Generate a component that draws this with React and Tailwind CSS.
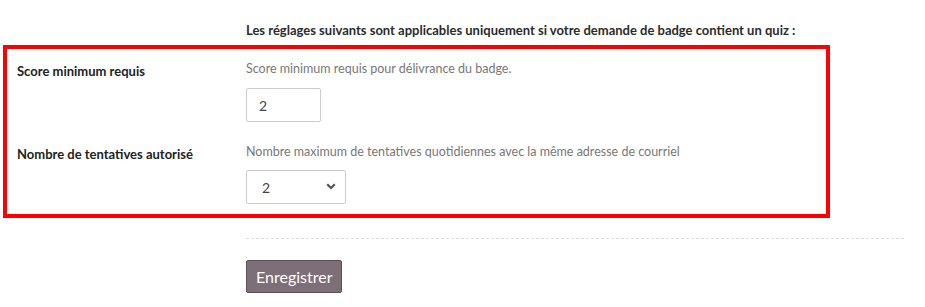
import React from 'react';

export default function App() {
    return (
        <div className="w-[925px] h-[307px] bg-white text-[#333] font-['Lato','Liberation_Sans',sans-serif] pt-[21px]">
            {/* Heading */}
            <p className="ml-[246px] text-[13px] leading-[18px] font-bold text-[#2b2b2b] mb-[6px]">
                Les réglages suivants sont applicables uniquement si votre demande de badge contient un quiz :
            </p>

            {/* Quiz settings */}
            <div className="ml-[3px] w-[827px] h-[173px] border-4 border-[#ff0000] pt-[10px] pl-[10px]">
                <div className="flex">
                    <label className="w-[229px] pt-[3px] text-[13px] leading-[18px] font-bold text-[#222]">
                        Score minimum requis
                    </label>
                    <div>
                        <p className="text-[12.5px] leading-[20px] text-[#777]">
                            Score minimum requis pour délivrance du badge.
                        </p>
                        <input
                            type="text"
                            defaultValue="2"
                            className="mt-[9px] w-[75px] h-[34px] border border-[#cccccc] rounded-[2px] pl-[12px] text-[14px] text-[#444] outline-none"
                        />
                    </div>
                </div>

                <div className="flex mt-[20px]">
                    <label className="w-[229px] pt-[3px] text-[13px] leading-[18px] font-bold text-[#222]">
                        Nombre de tentatives autorisé
                    </label>
                    <div>
                        <p className="text-[12.5px] leading-[20px] text-[#777]">
                            Nombre maximum de tentatives quotidiennes avec la même adresse de courriel
                        </p>
                        <div className="relative mt-[8px] w-[100px] h-[34px]">
                            <select
                                defaultValue="2"
                                className="appearance-none w-full h-full border border-[#cccccc] rounded-[2px] pl-[15px] text-[14px] text-[#444] bg-white outline-none"
                            >
                                <option>1</option>
                                <option>2</option>
                                <option>3</option>
                            </select>
                            <svg
                                className="absolute right-[10px] top-[13px] pointer-events-none"
                                width="10"
                                height="7"
                                viewBox="0 0 10 7"
                            >
                                <path d="M1.2 1.3 L5 5 L8.8 1.3" fill="none" stroke="#555" strokeWidth="2.2" />
                            </svg>
                        </div>
                    </div>
                </div>
            </div>

            {/* Footer */}
            <div className="ml-[246px] w-[658px] mt-[20px] border-t border-dashed border-[#dddddd]" />
            <button className="ml-[246px] mt-[21px] h-[33px] px-[9px] bg-[#7d6f78] border border-[#5b4e56] rounded-[2px] text-white text-[16px]">
                Enregistrer
            </button>
        </div>
    );
}
